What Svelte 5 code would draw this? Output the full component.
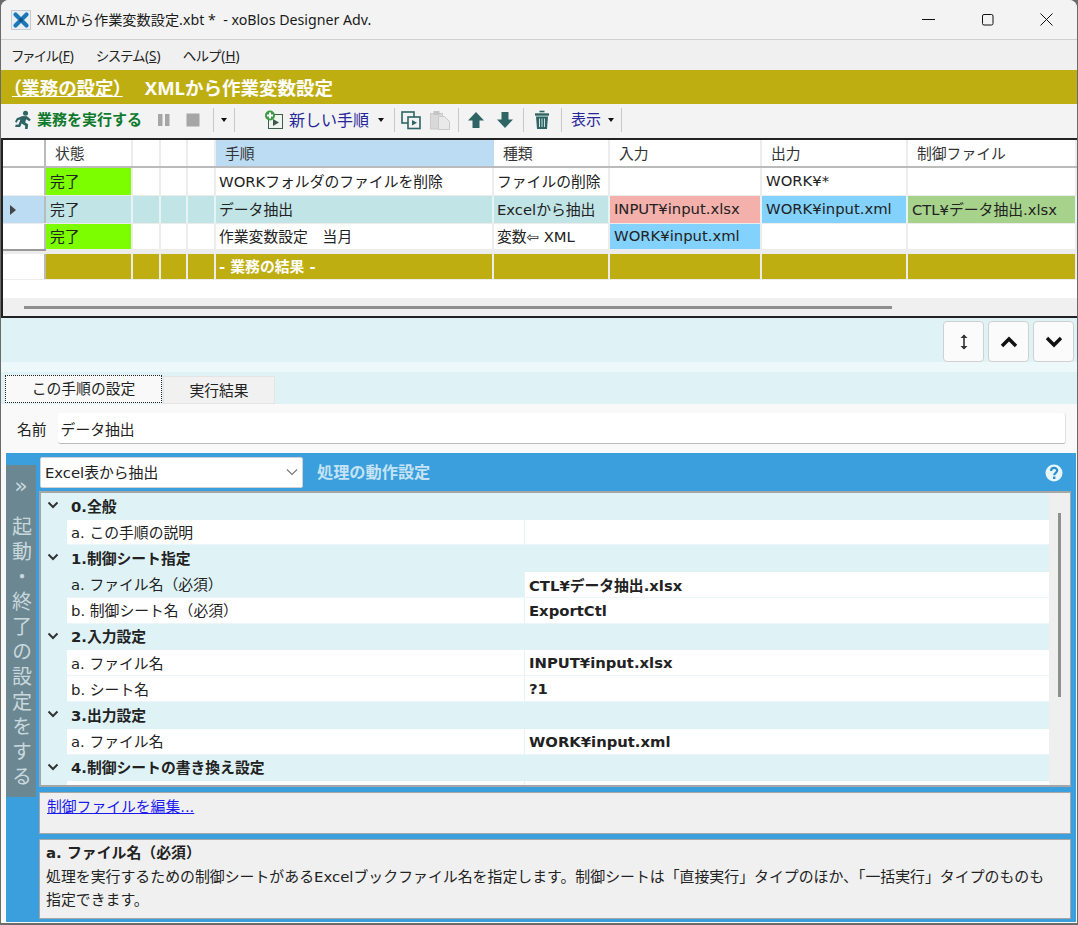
<script lang="ts">
  const steps = [
    { status: "完了", done: true, name: "WORKフォルダのファイルを削除", kind: "ファイルの削除", input: "", output: "WORK¥*", ctl: "" },
    { status: "完了", done: false, name: "データ抽出", kind: "Excelから抽出", input: "INPUT¥input.xlsx", output: "WORK¥input.xml", ctl: "CTL¥データ抽出.xlsx", selected: true },
    { status: "完了", done: true, name: "作業変数設定　当月", kind: "変数⇦ XML", input: "WORK¥input.xml", output: "", ctl: "", inputXml: true }
  ];

  const tree = [
    { title: "0.全般", h: "h27", rows: [{ label: "a. この手順の説明", value: "", h: "h25" }] },
    { title: "1.制御シート指定", h: "h27", rows: [
      { label: "a. ファイル名（必須）", value: "CTL¥データ抽出.xlsx", h: "h26", current: true },
      { label: "b. 制御シート名（必須）", value: "ExportCtl", h: "h26" }
    ] },
    { title: "2.入力設定", h: "h27", rows: [
      { label: "a. ファイル名", value: "INPUT¥input.xlsx", h: "h26" },
      { label: "b. シート名", value: "?1", h: "h26" }
    ] },
    { title: "3.出力設定", h: "h27", rows: [{ label: "a. ファイル名", value: "WORK¥input.xml", h: "h26" }] },
    { title: "4.制御シートの書き換え設定", h: "h27", rows: [{ label: "", value: "", h: "h4" }] }
  ];
</script>

<div class="window">
  <div class="titlebar">
    <svg class="logo" viewBox="0 0 20 20" width="20" height="20">
      <rect x="0.5" y="0.5" width="19" height="19" fill="#e8eef2" stroke="#c4ccd2" />
      <path d="M4.5 4.5L15.5 15.5M15.5 4.5L4.5 15.5" stroke="#1b78b8" stroke-width="4.2" stroke-linecap="round" />
      <circle cx="10" cy="10" r="2" fill="#14527f" />
    </svg>
    <span class="title">XMLから作業変数設定.xbt *&nbsp; - xoBlos Designer Adv.</span>
    <div class="winbtns">
      <svg viewBox="0 0 13 13" width="13" height="13"><path d="M0 6.5H13" stroke="#111" stroke-width="1" /></svg>
      <svg viewBox="0 0 13 13" width="13" height="13"><rect x="1.5" y="1.5" width="10.5" height="10.5" rx="1.5" fill="none" stroke="#111" stroke-width="1" /></svg>
      <svg viewBox="0 0 13 13" width="13" height="13"><path d="M0.5 0.5L12.5 12.5M12.5 0.5L0.5 12.5" stroke="#111" stroke-width="1" /></svg>
    </div>
  </div>

  <div class="menubar">
    <span>ファイル(<u>F</u>)</span>
    <span>システム(<u>S</u>)</span>
    <span>ヘルプ(<u>H</u>)</span>
  </div>

  <div class="job-header">
    <u>（業務の設定）</u>
    <span>XMLから作業変数設定</span>
  </div>

  <div class="toolbar">
    <svg class="run" viewBox="0 0 20 20" width="20" height="20">
      <circle cx="12.5" cy="3.2" r="2.5" fill="#2f6464" />
      <path d="M9.5 6L14 6.2 17.8 9.6 16.4 11.2 13.2 9.2 12.2 12.2 15.2 14.6 14.6 19 12 19 12.2 15.8 8.6 13.6 7.2 17 2.2 17 2.6 14.8 5.6 14.4 7.4 9.4 5 10.2 3.6 12.8 2 11.8 3.8 8.2Z" fill="#2f6464" />
    </svg>
    <span class="tool-run">業務を実行する</span>
    <svg class="pause" viewBox="0 0 14 14" width="14" height="14"><path d="M1 1h4.5v12H1zM8 1h4.5v12H8z" fill="#a6a6a6" /></svg>
    <svg class="stop" viewBox="0 0 14 14" width="14" height="14"><rect x="0.5" y="0.5" width="13" height="13" fill="#a6a6a6" /></svg>
    <span class="sep sep-a"></span>
    <span class="caret caret-a"></span>
    <span class="sep sep-b"></span>
    <svg class="newstep" viewBox="0 0 20 20" width="20" height="20">
      <rect x="4.5" y="4.5" width="14" height="14" fill="#eef4ee" stroke="#3b5d4b" />
      <path d="M9 9l6 3.5L9 16z" fill="#3b5d4b" />
      <circle cx="6" cy="5.5" r="5" fill="#3d9a45" />
      <path d="M6 2.5v6M3 5.5h6" stroke="#fff" stroke-width="2" />
    </svg>
    <span class="tool-new">新しい手順</span>
    <span class="caret caret-b"></span>
    <span class="sep sep-c"></span>
    <svg class="copy" viewBox="0 0 20 20" width="20" height="20">
      <rect x="1" y="2" width="12" height="11" fill="#f3f3f3" stroke="#2f6464" stroke-width="1.6" />
      <rect x="7" y="7" width="12" height="11.5" fill="#f3f3f3" stroke="#2f6464" stroke-width="1.6" />
      <path d="M11 10l5 2.7-5 2.7z" fill="#2f6464" />
    </svg>
    <svg class="paste" viewBox="0 0 20 20" width="20" height="20">
      <rect x="0.5" y="3.5" width="12" height="15.5" fill="#d9d9d9" stroke="#c9c9c9" />
      <rect x="3.5" y="1" width="6" height="4" fill="#c4c4c4" />
      <path d="M8.5 6.5h6l5 5v8h-11z" fill="#e9e9e9" stroke="#c9c9c9" />
    </svg>
    <span class="sep sep-d"></span>
    <svg class="arrow-up" viewBox="0 0 18 18" width="18" height="18"><path d="M9 1L17 9.5H12.5V17H5.5V9.5H1Z" fill="#2f6464" /></svg>
    <svg class="arrow-down" viewBox="0 0 18 18" width="18" height="18"><path d="M9 17L17 8.5H12.5V1H5.5V8.5H1Z" fill="#2f6464" /></svg>
    <span class="sep sep-e"></span>
    <svg class="trash" viewBox="0 0 18 20" width="18" height="20">
      <path d="M6.5 1.5h5" stroke="#2f6464" stroke-width="1.6" />
      <path d="M2 4.5h14" stroke="#2f6464" stroke-width="2.4" />
      <path d="M3 6.5h12l-1 12.5H4z" fill="#2f6464" />
      <path d="M6.5 8.5v8.5M9 8.5v8.5M11.5 8.5v8.5" stroke="#cfe0e0" stroke-width="1" />
    </svg>
    <span class="sep sep-f"></span>
    <span class="tool-view">表示</span>
    <span class="caret caret-c"></span>
    <span class="sep sep-g"></span>
  </div>

  <div class="grid">
    <div class="grow head">
      <div class="c rowhead"></div>
      <div class="c">状態</div>
      <div class="c"></div><div class="c"></div><div class="c"></div>
      <div class="c cur">手順</div>
      <div class="c">種類</div>
      <div class="c">入力</div>
      <div class="c">出力</div>
      <div class="c">制御ファイル</div>
    </div>
    {#each steps as s}
      <div class="grow step" class:selected={s.selected} class:short={s.inputXml}>
        <div class="c rowhead">
          {#if s.selected}<span class="pointer"></span>{/if}
        </div>
        <div class="c tight" class:done={s.done}>{s.status}</div>
        <div class="c"></div><div class="c"></div><div class="c"></div>
        <div class="c">{s.name}</div>
        <div class="c">{s.kind}</div>
        <div class="c tight" class:file-in={s.selected} class:file-out={s.inputXml}>{s.input}</div>
        <div class="c tight" class:file-out={s.selected}>{s.output}</div>
        <div class="c tight" class:file-ctl={s.selected}>{s.ctl}</div>
      </div>
    {/each}
    <div class="grow gap">
      <div class="c rowhead"></div>
    </div>
    <div class="grow result">
      <div class="c rowhead"></div>
      <div class="c"></div>
      <div class="c"></div><div class="c"></div><div class="c"></div>
      <div class="c bold">- 業務の結果 -</div>
      <div class="c"></div><div class="c"></div><div class="c"></div><div class="c"></div>
    </div>
    <div class="grid-fill"></div>
    <div class="hscroll"><span></span></div>
  </div>

  <div class="split">
    <button class="sq" aria-label="resize">
      <svg viewBox="0 0 12 18" width="12" height="18"><path d="M6 2v14" stroke="#333" stroke-width="1.6" /><path d="M2.5 5L6 1.5 9.5 5zM2.5 13L6 16.5 9.5 13z" fill="#333" /></svg>
    </button>
    <button class="sq" aria-label="up">
      <svg viewBox="0 0 18 12" width="18" height="12"><path d="M2 10L9 3l7 7" fill="none" stroke="#111" stroke-width="3.4" /></svg>
    </button>
    <button class="sq" aria-label="down">
      <svg viewBox="0 0 18 12" width="18" height="12"><path d="M2 2l7 7 7-7" fill="none" stroke="#111" stroke-width="3.4" /></svg>
    </button>
  </div>

  <div class="tabs">
    <div class="tab active"><span>この手順の設定</span></div>
    <div class="tab">実行結果</div>
  </div>

  <div class="name-row">
    <span>名前</span>
    <div class="name-input">データ抽出</div>
  </div>

  <div class="panel">
    <div class="side">
      <span class="chev">»</span>
      <span class="vert">起動・終了の設定をする</span>
    </div>
    <div class="main">
      <div class="panel-head">
        <div class="select">
          <span>Excel表から抽出</span>
          <svg viewBox="0 0 12 8" width="12" height="8"><path d="M1 1.5l5 5 5-5" fill="none" stroke="#777" stroke-width="1.1" /></svg>
        </div>
        <span class="panel-title">処理の動作設定</span>
        <svg class="help" viewBox="0 0 18 18" width="18" height="18">
          <circle cx="9" cy="9" r="8.5" fill="#e6f6fb" />
          <path d="M6 7c0-4 6.2-4 6.2-.4 0 2.2-3 2.2-3 4.6" fill="none" stroke="#2f8ecb" stroke-width="2.2" />
          <rect x="8" y="12.6" width="2.4" height="2.4" fill="#2f8ecb" />
        </svg>
      </div>

      <div class="tree">
        <div class="tree-body">
          {#each tree as sec}
            <div class="sec {sec.h}">
              <svg viewBox="0 0 12 8" width="12" height="8"><path d="M1.5 1.5L6 6l4.5-4.5" fill="none" stroke="#333" stroke-width="2" /></svg>
              <span>{sec.title}</span>
            </div>
            {#each sec.rows as r}
              <div class="row {r.h}">
                <div class="label" class:current={r.current}>{r.label}</div>
                <div class="value">{r.value}</div>
              </div>
            {/each}
          {/each}
        </div>
        <div class="vscroll"><span></span></div>
      </div>

      <div class="linkbox"><a href="#edit">制御ファイルを編集...</a></div>

      <div class="helpbox">
        <b>a. ファイル名（必須）</b>
        <p>処理を実行するための制御シートがあるExcelブックファイル名を指定します。制御シートは「直接実行」タイプのほか、「一括実行」タイプのものも<br />指定できます。</p>
      </div>
    </div>
  </div>
</div>

<style>
  :global(body) {
    background: #6b6b6b;
  }

  .window {
    width: 1076px;
    height: 923px;
    margin-left: 1px;
    display: flex;
    flex-direction: column;
    overflow: hidden;
    border-radius: 8px 8px 0 0;
    background: #f9f9f9;
    font-family: "DejaVu Sans", "Noto Sans CJK JP", sans-serif;
    font-size: 14.8px;
    color: #222;
  }

  .titlebar {
    height: 39px;
    flex: none;
    display: flex;
    align-items: center;
    box-sizing: content-box;
    padding-left: 10px;
    background: #f3f3f3;
    border-bottom: 1px solid #cfcfcf;
    font-family: "Noto Sans", "Noto Sans CJK JP", sans-serif;
    font-size: 14.2px;
    color: #1a1a1a;
  }
  .title {
    margin-bottom: 2px;
  }
  .logo {
    margin-right: 6px;
  }
  .winbtns {
    margin-left: auto;
    display: flex;
    gap: 46px;
    padding-right: 24px;
  }

  .menubar {
    height: 30px;
    flex: none;
    display: flex;
    gap: 22px;
    align-items: center;
    box-sizing: border-box;
    padding: 0 0 1px 11px;
    background: #f0f0f0;
    font-family: "Noto Sans", "Noto Sans CJK JP", sans-serif;
    font-feature-settings: "palt";
    font-size: 13.5px;
  }

  .job-header {
    height: 34px;
    flex: none;
    display: flex;
    align-items: center;
    gap: 22px;
    padding-left: 11px;
    background: #bfae12;
    color: #fff;
    font-family: "Noto Sans", "Noto Sans CJK JP", sans-serif;
    font-size: 18.5px;
    font-weight: 700;
  }
  .job-header u {
    font-feature-settings: "palt";
  }

  .toolbar {
    height: 34px;
    flex: none;
    display: flex;
    align-items: center;
    box-sizing: border-box;
    padding: 0 0 3px 12px;
    background: #f3f3f3;
    font-family: "Noto Sans", "Noto Sans CJK JP", sans-serif;
    font-size: 15px;
  }
  .tool-run {
    margin: 0 0 2px 4px;
    color: #0d7a2c;
    font-weight: 700;
  }
  .pause { margin-left: 15px; }
  .stop { margin-left: 15px; }
  .sep {
    width: 1px;
    height: 24px;
    background: #c8c8c8;
  }
  .sep-a { margin-left: 13px; }
  .caret {
    width: 0;
    height: 0;
    border-left: 3.5px solid transparent;
    border-right: 3.5px solid transparent;
    border-top: 4px solid #111;
  }
  .caret-a { margin-left: 7px; }
  .sep-b { margin-left: 7px; }
  .newstep { margin-left: 29px; }
  .tool-new {
    margin: 0 0 2px 5px;
    font-size: 16px;
    color: #26269a;
  }
  .caret-b { margin-left: 9px; }
  .sep-c { margin-left: 10px; }
  .copy { margin-left: 6px; }
  .paste { margin-left: 9px; }
  .sep-d { margin-left: 8px; }
  .arrow-up { margin-left: 8px; }
  .arrow-down { margin-left: 11px; }
  .sep-e { margin-left: 9px; }
  .trash { margin-left: 9px; }
  .sep-f { margin-left: 10px; }
  .tool-view {
    margin: 0 0 2px 9px;
    color: #26269a;
  }
  .caret-c { margin-left: 7px; }
  .sep-g { margin-left: 7px; }

  .grid {
    height: 180px;
    flex: none;
    display: flex;
    flex-direction: column;
    box-sizing: border-box;
    border: 2px solid #222;
    border-right: none;
    background: #fff;
  }
  .grow {
    display: grid;
    box-sizing: border-box;
    grid-template-columns: 43px 87px 28px 27px 28px 278px 116px 152px 146px 1fr;
  }
  .c {
    box-sizing: border-box;
    border-right: 2px solid #ececec;
    padding: 0 3px 2px;
    display: flex;
    align-items: center;
    white-space: nowrap;
    overflow: hidden;
  }
  .tight { padding-left: 4px; }
  .rowhead {
    border-right: 2px solid #bbb;
    padding: 0;
  }
  .head {
    height: 28px;
    border-bottom: 2px solid #bbb;
  }
  .head .c {
    padding-left: 9px;
    color: #333;
  }
  .head .c.cur {
    background: #bcdcf3;
    border-right-color: transparent;
    padding-left: 9px;
  }
  .step {
    height: 28px;
    border-bottom: 1px solid #ececec;
  }
  .step.short {
    height: 25px;
    border-bottom: none;
  }
  .done { background: #7cfd00; }
  .selected { background: #c1e4e7; }
  .selected .c { border-right-color: #e8f3f4; }
  .selected .rowhead {
    background: #bcdcf3;
    border-right-color: #bbb;
  }
  .file-in { background: #f4b0aa; }
  .file-out { background: #82d2fd; }
  .file-ctl { background: #a6d28c; }
  .pointer {
    width: 0;
    height: 0;
    margin-left: 7px;
    border-top: 5px solid transparent;
    border-bottom: 5px solid transparent;
    border-left: 6px solid #444;
  }
  .gap {
    height: 5px;
    background: #ececec;
  }
  .gap .rowhead {
    border-top: 2px solid #999;
    border-right: none;
    background: #ececec;
    grid-column: 1;
  }
  .result {
    height: 26px;
    color: #fff;
    border-bottom: 1px solid #ececec;
  }
  .result .c:not(.rowhead) {
    background: #bfae12;
  }
  .result .rowhead {
    background: #fff;
  }
  .bold { font-weight: 700; }
  .grid-fill {
    flex: 1;
    background: #fff;
  }
  .hscroll {
    height: 18px;
    flex: none;
    display: flex;
    align-items: center;
    padding-left: 21px;
    background: #f0f0f0;
  }
  .hscroll span {
    width: 868px;
    height: 3px;
    background: #8f8f8f;
  }

  .split {
    height: 45px;
    flex: none;
    display: flex;
    justify-content: flex-end;
    align-items: flex-start;
    gap: 4px;
    box-sizing: border-box;
    padding: 3px 3px 0 0;
    background: #dff3f7;
    border-bottom: 1px solid #eef8fa;
  }
  .sq {
    width: 41px;
    height: 41px;
    padding: 0;
    display: flex;
    align-items: center;
    justify-content: center;
    background: #fbfbfb;
    border: 1px solid #d0d0d0;
    border-radius: 4px;
  }

  .tabs {
    height: 41px;
    flex: none;
    display: flex;
    align-items: flex-end;
    padding-left: 4px;
    background: linear-gradient(#ecf8fa 9px, #dff3f7 9px);
  }
  .tab {
    width: 112px;
    height: 28px;
    display: flex;
    align-items: center;
    justify-content: center;
    background: #f1f1f1;
    border: 1px solid #e4e4e4;
    box-sizing: border-box;
    padding-bottom: 2px;
  }
  .tab.active {
    width: 157px;
    height: 28px;
    margin: 0 1px 1px 0;
    padding-bottom: 3px;
    background: #f9f9f9;
    border: 1px dotted #222;
  }

  .name-row {
    height: 49px;
    flex: none;
    display: flex;
    align-items: center;
    padding: 0 11px 0 16px;
    gap: 11px;
    background: #f9f9f9;
  }
  .name-input {
    flex: 1;
    height: 30px;
    display: flex;
    align-items: center;
    padding-left: 3px;
    background: #fff;
    border-bottom: 1px solid #bbb;
    border-right: 1px solid #e2e2e2;
    border-radius: 3px;
  }

  .panel {
    margin-left: 5px;
    margin-right: 1px;
    height: 469px;
    flex: none;
    display: flex;
    background: #3a9fdc;
  }
  .side {
    width: 30px;
    height: 332px;
    margin-top: 12px;
    flex: none;
    display: flex;
    flex-direction: column;
    align-items: center;
    background: #6b8792;
    color: #c8d8dd;
  }
  .chev {
    font-size: 22px;
    line-height: 22px;
    margin-top: 10px;
    margin-bottom: 19px;
  }
  .vert {
    writing-mode: vertical-rl;
    font-size: 20px;
    letter-spacing: 5px;
  }
  .main {
    flex: 1;
    min-width: 0;
    display: flex;
    flex-direction: column;
    padding: 4px 5px 0 3px;
  }
  .panel-head {
    height: 31px;
    flex: none;
    display: flex;
    align-items: center;
    margin-left: 1px;
  }
  .select {
    width: 263px;
    height: 31px;
    box-sizing: border-box;
    display: flex;
    align-items: center;
    justify-content: space-between;
    padding: 0 4px 2px;
    background: #fff;
    border: 1px solid #d2d2d2;
    border-radius: 2px;
  }
  .panel-title {
    margin: 0 0 3px 14px;
    color: #c5e3f5;
    font-weight: 700;
    font-size: 16.2px;
  }
  .help {
    margin-left: auto;
    margin-right: 8px;
  }
  .tree {
    height: 296px;
    margin-top: 3px;
    flex: none;
    display: flex;
    box-sizing: border-box;
    border: 2px solid #a6a6a6;
    border-right-width: 1px;
    background: #efefef;
    overflow: hidden;
  }
  .tree-body {
    width: 1008px;
    flex: none;
    background: #dff3f7;
  }
  .vscroll {
    flex: 1;
    display: flex;
    justify-content: center;
    padding-top: 20px;
  }
  .vscroll span {
    width: 3px;
    height: 184px;
    background: #8f8f8f;
  }
  .sec {
    display: flex;
    align-items: center;
    box-sizing: border-box;
    font-weight: 700;
    padding: 0 0 2px 6px;
  }
  .sec span {
    margin-left: 12px;
  }
  .h27 { height: 26.5px; }
  .h26 { height: 26px; }
  .h25 { height: 25.5px; }
  .h4 { height: 5px; }
  .row {
    display: flex;
    margin-left: 26px;
    background: #fff;
    border-bottom: 1px solid #eaf6f9;
    box-sizing: border-box;
  }
  .label {
    width: 458px;
    box-sizing: border-box;
    padding: 0 0 1px 4px;
    display: flex;
    align-items: center;
    border-right: 1px solid #e8f2f4;
  }
  .label.current { background: #dff3f7; }
  .value {
    flex: 1;
    padding-left: 4px;
    display: flex;
    align-items: center;
    font-weight: 700;
  }
  .linkbox {
    height: 42px;
    margin-top: 5px;
    flex: none;
    box-sizing: border-box;
    padding: 2px 0 0 7px;
    background: #f0f0f0;
    border: 1px solid #a6a6a6;
  }
  .linkbox a {
    color: #1a1aee;
  }
  .helpbox {
    height: 80px;
    margin-top: 5px;
    flex: none;
    box-sizing: border-box;
    padding: 2px 6px;
    background: #f0f0f0;
    border: 1px solid #a6a6a6;
    font-size: 14.9px;
    line-height: 23px;
  }
  .helpbox b {
    display: block;
  }
  .helpbox p {
    margin: 1px 0 0;
  }
</style>
